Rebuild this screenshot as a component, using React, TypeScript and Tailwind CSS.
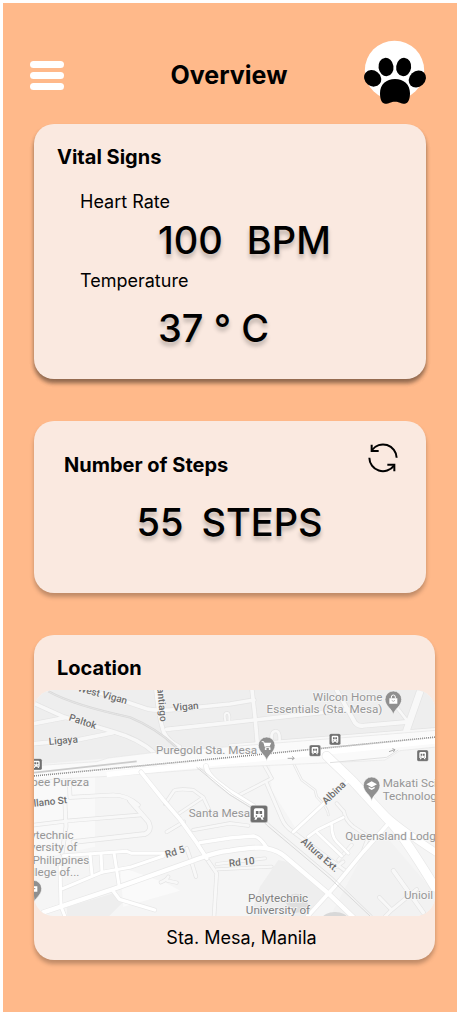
import React from "react";

const casedRoads: { d: string; w: number }[] = [
  { d: "M12 70 L100 110 L250 155 Q330 178 372 218", w: 11 },
  { d: "M12 131 L105 113", w: 11 },
  { d: "M12 191 L150 178 L250 158", w: 11 },
  { d: "M160 22 L350 86 Q370 92 420 90 L600 72 L672 60", w: 11 },
  { d: "M378 30 Q388 120 402 158 Q415 185 448 200", w: 11 },
  { d: "M410 148 L600 128 L735 113 L980 86", w: 11 },
  { d: "M666 30 L676 120 L684 215", w: 11 },
  { d: "M600 197 L684 190 L1215 148", w: 8 },
  { d: "M920 30 L975 128 Q985 140 1000 137 L1130 126", w: 12 },
  { d: "M1085 62 L1130 120", w: 8 },
  { d: "M1172 30 L1130 150", w: 20 },
  { d: "M586 122 Q580 100 590 98 Q600 98 598 120", w: 6 },
  { d: "M728 192 Q718 155 737 153 Q752 153 748 190", w: 8 },
  { d: "M405 372 L432 332 Q445 325 490 330 L520 352 L545 405", w: 8 },
  { d: "M448 400 L500 365 L520 352", w: 7 },
  { d: "M118 300 L120 352 L250 345 Q290 345 325 375", w: 10 },
  { d: "M105 372 L108 440 L96 520", w: 10 },
  { d: "M12 435 L120 422 L330 405", w: 9 },
  { d: "M300 362 L355 425 Q368 452 345 462 L130 486", w: 12 },
  { d: "M410 456 L462 425", w: 8 },
  { d: "M490 450 L600 430 L655 437", w: 8 },
  { d: "M470 505 Q485 545 498 590", w: 9 },
  { d: "M392 607 Q410 600 415 590 M412 602 L440 608", w: 8 },
  { d: "M526 530 L560 580 L552 710", w: 9 },
  { d: "M560 568 L725 560", w: 7 },
  { d: "M560 552 L705 535", w: 7 },
  { d: "M700 250 L725 295 L628 345", w: 8 },
  { d: "M788 245 L815 300 L855 330 L860 350 Q895 385 895 405", w: 4 },
  { d: "M710 310 L755 415 Q765 440 790 456 L945 572", w: 9 },
  { d: "M920 370 L942 395 Q945 420 970 440 L1015 470 L1000 510 M965 495 L925 540 M940 545 L920 560", w: 8 },
  { d: "M1090 572 L1180 698", w: 11 },
  { d: "M1048 652 L1085 690 L1160 628 M1085 690 L1065 710", w: 9 },
];

const mainRoads: { d: string; w: number }[] = [
  { d: "M40 697 L250 627 L480 545 Q560 515 600 512 Q690 498 710 505 Q745 512 765 530 L895 640 L970 712", w: 13 },
  { d: "M333 276 L400 360 L450 418 L500 488 L530 535", w: 11 },
  { d: "M510 488 L600 474 L670 468 Q690 470 710 503", w: 10 },
  { d: "M98 626 L215 577 L300 562 L400 528 M405 520 L305 520 L290 514 L100 527", w: 9 },
  { d: "M180 522 L186 584 M213 522 L216 577 M252 518 L268 622 M90 560 L93 680 L106 712", w: 9 },
  { d: "M250 634 L268 658 L374 690", w: 10 },
  { d: "M528 258 Q530 280 560 305 L600 335 L670 378", w: 13 },
  { d: "M952 305 L790 456", w: 9 },
  { d: "M835 470 L862 450 L940 412 M862 458 L935 528 M905 435 Q905 470 920 485 L955 520", w: 8 },
  { d: "M1080 425 L1000 515 L912 622 L832 710", w: 11 },
  { d: "M890 228 L970 305 L1075 420 Q1110 450 1215 622", w: 26 },
  { d: "M1060 400 Q1100 440 1222 520", w: 20 },
];

function Roads({ roads, edge, fill }: { roads: { d: string; w: number }[]; edge: string; fill: string }) {
  return (
    <g fill="none" strokeLinecap="round" strokeLinejoin="round">
      {roads.map((r) => (
        <path key={"edge" + r.d} d={r.d} stroke={edge} strokeWidth={r.w + 4} />
      ))}
      {roads.map((r) => (
        <path key={r.d} d={r.d} stroke={fill} strokeWidth={r.w} />
      ))}
    </g>
  );
}

function Pin({ x, y, children }: { x: number; y: number; children?: React.ReactNode }) {
  return (
    <g transform={`translate(${x} ${y})`}>
      <path
        d="M0 46 C-4 28 -25 20 -25 0 A25 25 0 0 1 25 0 C25 20 4 28 0 46Z"
        fill="#8f8f8f"
        stroke="#f8f8f8"
        strokeWidth="2"
      />
      {children}
    </g>
  );
}

function Station({ x, y, s = 1 }: { x: number; y: number; s?: number }) {
  return (
    <g transform={`translate(${x} ${y}) scale(${s})`}>
      <rect x="-17" y="-17" width="34" height="34" rx="5" fill="#707070" stroke="#fff" strokeWidth="1" />
      <path d="M-10 -7 Q-10 -11 -6 -11 H6 Q10 -11 10 -7 V7 H7 L9 11 H5 L3 7 H-3 L-5 11 H-9 L-7 7 H-10Z" fill="#fff" />
      <path d="M-6 -6 H-1 V0 H-6Z M1 -6 H6 V0 H1Z" fill="#707070" />
      <circle cx="-5" cy="4" r="1.6" fill="#707070" />
      <circle cx="5" cy="4" r="1.6" fill="#707070" />
    </g>
  );
}

function StreetMap() {
  return (
    <svg
      role="img"
      aria-label="Map of Santa Mesa"
      viewBox="12 30 1203 678"
      preserveAspectRatio="xMidYMid slice"
      className="block h-[226px] w-full rounded-[20px] font-['Roboto',sans-serif]"
    >
      <rect x="0" y="0" width="1230" height="720" fill="#f5f5f5" />
      <path d="M0 0 H1230 V150 L400 215 L235 235 L0 255Z" fill="#eeeeee" />
      <path d="M12 290 L195 280 V500 L12 540Z" fill="#f9f9f9" />
      <path d="M270 560 L410 610 L450 632 L280 680Z" fill="#fafafa" />
      <path d="M720 250 H890 L960 310 L800 450 L725 330Z" fill="#f9f9f9" />
      <path d="M110 682 L250 640 L280 665 L236 710 H112Z" fill="#eeeeee" />
      <path d="M660 710 L690 620 L745 540 L770 545 L890 640 L830 710Z" fill="#eeeeee" />
      <path d="M1000 520 L1060 460 L1215 640 V710 H900Z" fill="#f2f2f2" />
      <path d="M765 665 A34 34 0 0 1 830 665 L845 690 L790 700Z" fill="#dedede" />
      <ellipse cx="915" cy="716" rx="38" ry="20" fill="#d8d8d8" />

      <Roads roads={casedRoads} edge="#e3e3e3" fill="#f8f8f8" />

      <path
        d="M0 258 L200 245 L235 234 L400 214 L600 200 L1230 150 V200 L1110 212 L1065 240 L900 248 L590 262 L250 288 L0 302Z"
        fill="#fafafa"
        stroke="#e5e5e5"
        strokeWidth="2"
      />
      <path d="M230 284 L600 245 L1230 182" stroke="#fff" strokeWidth="16" fill="none" />
      <Roads roads={mainRoads} edge="#e8e8e8" fill="#ffffff" />
      <path d="M900 248 L1070 232 L1105 210" stroke="#e0e0e0" strokeWidth="3" fill="none" />

      <g fill="none" stroke="#d9d9d9" strokeWidth="3">
        <path d="M55 34 Q130 76 300 112 Q380 145 440 202" strokeWidth="7" />
        <path d="M55 34 Q130 76 300 112 Q380 145 440 202" stroke="#ececec" strokeWidth="2" />
        <path d="M500 262 L600 345 L665 385 L710 435 L900 595 L1020 708" />
        <path d="M507 262 L607 343 L672 383 L717 431 L907 591 L1028 708" strokeWidth="2" />
        <path d="M12 278 L320 244" stroke="#cccccc" strokeWidth="5" />
      </g>
      <path d="M0 289 L600 232 L1230 170" fill="none" stroke="#fff" strokeWidth="9" />
      <path d="M0 289 L600 232 L1230 170" fill="none" stroke="#858585" strokeWidth="5" strokeDasharray="3 3" />
      <path
        d="M773 235 H792 M786 229 L793 235 L786 240 M1077 215 L1094 209 M1087 206 L1095 209 L1090 216"
        fill="none"
        stroke="#aaa"
        strokeWidth="3"
      />

      <g fill="#6e6e6e" stroke="#f7f7f7" strokeWidth="4" paintOrder="stroke" fontSize="30" fontWeight="500">
        <text transform="translate(142 33) rotate(15)">West Vigan</text>
        <text transform="translate(115 121) rotate(18)">Paltok</text>
        <text transform="translate(57 195) rotate(-5)">Ligaya</text>
        <text transform="translate(380 7) rotate(85)">Santiago</text>
        <text transform="translate(430 93) rotate(-5)">Vigan</text>
        <text transform="translate(12 380) rotate(-6)">llano St</text>
        <text transform="translate(409 534) rotate(-17)">Rd 5</text>
        <text transform="translate(598 560) rotate(-6)">Rd 10</text>
        <text transform="translate(888 375) rotate(-44)">Albina</text>
        <text transform="translate(811 487) rotate(41)">Altura Ext.</text>
      </g>

      <g fill="#969696" stroke="#f7f7f7" strokeWidth="4" paintOrder="stroke" fontSize="35">
        <text x="1057" y="63" textAnchor="end">Wilcon Home</text>
        <text x="1057" y="100" textAnchor="end">Essentials (Sta. Mesa)</text>
        <text x="378" y="221">Puregold Sta. Mesa</text>
        <text x="177" y="317" textAnchor="end">pee Pureza</text>
        <text x="1058" y="322">Makati Sci</text>
        <text x="1058" y="360">Technolog</text>
        <text x="476" y="411">Santa Mesa</text>
        <text x="946" y="479">Queensland Lodg</text>
        <text x="1122" y="656">Unioil</text>
        <text x="131" y="477" textAnchor="end">ytechnic</text>
        <text x="142" y="514" textAnchor="end">versity of</text>
        <text x="178" y="551" textAnchor="end">Philippines</text>
        <text x="148" y="588" textAnchor="end">llege of...</text>
        <g fill="#7f7f7f" textAnchor="middle">
          <text x="744" y="665">Polytechnic</text>
          <text x="744" y="702">University of</text>
        </g>
      </g>

      <Pin x={1090} y={58}>
        <path d="M-12 -3 H12 V13 H-12Z" fill="#fff" />
        <path d="M-6 -3 V-7 A6 6 0 0 1 6 -7 V-3" fill="none" stroke="#fff" strokeWidth="3" />
        <path d="M-5 3 Q0 9 5 3" fill="none" stroke="#8f8f8f" strokeWidth="2" />
      </Pin>
      <Pin x={710} y={196}>
        <path d="M-15 -11 H-9 L-4 6 H11" fill="none" stroke="#fff" strokeWidth="3" />
        <path d="M-9 -8 H14 L9 3 H-5Z" fill="#fff" />
        <circle cx="-3" cy="11" r="3" fill="#fff" />
        <circle cx="9" cy="11" r="3" fill="#fff" />
      </Pin>
      <Pin x={1025} y={316}>
        <path d="M-16 -3 L0 -12 L16 -3 L0 6Z M-9 4 L0 9 L9 4 V9 L0 14 L-9 9Z" fill="#fff" />
      </Pin>
      <Pin x={10} y={626}>
        <path d="M-12 -7 H12 V9 H-12Z" fill="#fff" />
        <path d="M-6 0 H6" stroke="#8f8f8f" strokeWidth="3" />
      </Pin>

      <Station x={915} y={178} />
      <Station x={855} y={212} />
      <Station x={1178} y={227} />
      <Station x={19} y={253} />
      <Station x={687} y={402} s={1.55} />
    </svg>
  );
}

function PawLogo() {
  return (
    <svg viewBox="66 30 198 198" className="size-[66px]" role="img" aria-label="Pet profile">
      <circle cx="163.500" cy="121" r="89" fill="#fff" />
      <g fill="#000">
        <ellipse cx="138" cy="111" rx="22.500" ry="27.500" transform="rotate(-8 138 111)" />
        <ellipse cx="191" cy="111" rx="22.500" ry="27.500" transform="rotate(8 191 111)" />
        <ellipse cx="98" cy="145" rx="27" ry="23.500" transform="rotate(38 98 145)" />
        <ellipse cx="232" cy="147" rx="27.500" ry="23.500" transform="rotate(-42 232 147)" />
        <path d="M120 190 C120 163 139 147 165 147 C191 147 210 163 210 190 C210 207 205 221 195 221 C184 222 179 215 165 215 C151 215 146 222 135 221 C125 221 120 207 120 190Z" />
      </g>
    </svg>
  );
}

function RefreshIcon() {
  return (
    <svg viewBox="36 36 96 96" className="size-8" fill="none" stroke="#000" strokeWidth="6" aria-hidden="true">
      <path d="M125 83 A41 41 0 0 0 51 60 M43 83 A41 41 0 0 0 117 107" />
      <path d="M50 44 V63 H71 M97 104 H118 V124" />
    </svg>
  );
}

const reading = "flex text-[38px] leading-12 font-medium [text-shadow:0_4px_4px_rgba(0,0,0,0.25)]";

export default function App() {
  return (
    <div className="min-h-screen bg-white pt-[3px] pr-[2px] pl-[3px] font-[Inter,sans-serif] text-black">
      <main className="min-h-[calc(100vh-3px)] bg-[#ffb98a] pt-[37px] pr-[22px] pb-12 pl-[31px]">
        <header className="mr-[7px] -ml-1 grid grid-cols-3 items-center">
          <button type="button" aria-label="Open menu" className="mt-1 flex w-[34px] flex-col gap-1">
            <span className="h-[7px] rounded-full bg-white" />
            <span className="h-[7px] rounded-full bg-white" />
            <span className="h-[7px] rounded-full bg-white" />
          </button>
          <h1 className="mt-1 text-center text-[25px] leading-8 font-bold">Overview</h1>
          <div className="flex justify-end">
            <PawLogo />
          </div>
        </header>

        <section className="mt-[18px] mr-[9px] rounded-[20px] bg-[#fae9e0] px-[23px] pt-[21px] pb-[27px] shadow-[0_4px_4px_rgba(0,0,0,0.25),0_4px_4px_rgba(0,0,0,0.25)]">
          <h2 className="text-xl leading-6 font-bold">Vital Signs</h2>
          <dl className="mt-[21px] pl-[23px]">
            <dt className="text-lg leading-6">Heart Rate</dt>
            <dd className={"mt-[2px] gap-6 pl-[78px] " + reading}>
              <span>100</span>
              <span>BPM</span>
            </dd>
            <dt className="mt-[5px] text-lg leading-6">Temperature</dt>
            <dd className={"mt-[11px] pl-[78px] " + reading}>37 ° C</dd>
          </dl>
        </section>

        <section className="mt-[42px] mr-[9px] rounded-[20px] bg-[#fae9e0] pt-[21px] pr-[27px] pb-[47px] pl-[30px] shadow-[0_4px_4px_rgba(0,0,0,0.25)]">
          <div className="flex items-start justify-between">
            <h2 className="pt-[11px] text-xl leading-6 font-bold">Number of Steps</h2>
            <button type="button" aria-label="Refresh steps">
              <RefreshIcon />
            </button>
          </div>
          <p className={"mt-[21px] justify-center gap-[18px] pr-1 " + reading}>
            <span>55</span>
            <span>STEPS</span>
          </p>
        </section>

        <section className="mt-[42px] rounded-[20px] bg-[#fae9e0] pt-[21px] pb-[10px] shadow-[0_4px_4px_rgba(0,0,0,0.25)]">
          <h2 className="pl-[23px] text-xl leading-6 font-bold">Location</h2>
          <div className="mt-[10px]">
            <StreetMap />
          </div>
          <p className="mt-[10px] pl-[14px] text-center text-lg leading-6">Sta. Mesa, Manila</p>
        </section>
      </main>
    </div>
  );
}
